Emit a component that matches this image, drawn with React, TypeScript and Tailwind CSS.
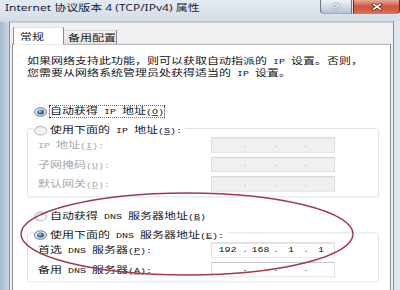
import React from 'react'

// ascii runs get a 6px-per-char mono face so the widths follow the old bitmap font
const Txt = ({ s }: { s: string }) => (
  <>
    {s
      .split(/([ -~]+)/)
      .filter(Boolean)
      .map((p, i) =>
        /^[ -~]+$/.test(p) ? (
          <span key={i} className="font-['Liberation_Mono',monospace] text-[10px] whitespace-pre">
            {p}
          </span>
        ) : (
          <React.Fragment key={i}>{p}</React.Fragment>
        )
      )}
  </>
)

const Mn = ({ pre, k, colon }: { pre: string; k: string; colon?: boolean }) => (
  <>
    <Txt s={pre} />
    <span className="font-['Liberation_Mono',monospace] text-[10px] whitespace-pre">
      (<span className="underline">{k}</span>){colon ? ':' : ''}
    </span>
  </>
)

const Radio = ({
  checked,
  focused,
  children,
}: {
  checked?: boolean
  focused?: boolean
  children: React.ReactNode
}) => (
  <div className="flex items-center h-[20px]">
    <span
      className={
        checked
          ? 'flex items-center justify-center w-[13px] h-[13px] rounded-full border border-[#626b76] bg-linear-to-br from-[#eeeeee] to-[#cfd3d8]'
          : 'flex items-center justify-center w-[13px] h-[13px] rounded-full border border-[#a3a8ae] bg-linear-to-br from-[#e6e6e6] to-[#ffffff]'
      }
    >
      {checked && (
        <span className="w-[7px] h-[7px] rounded-full bg-[radial-gradient(circle_at_40%_35%,#9fd0ef,#2a6298_55%,#123f6a)]" />
      )}
    </span>
    <span
      className={
        focused
          ? 'ml-[2px] leading-[13px] border border-dotted border-[#333]'
          : 'ml-[2px] leading-[13px] border border-transparent'
      }
    >
      {children}
    </span>
  </div>
)

const IpBox = ({ v, disabled }: { v?: string[]; disabled?: boolean }) => {
  const p = v ?? ['', '', '', '']
  const dot = disabled ? 'text-[#b4b4b4]' : 'text-[#444]'
  return (
    <div
      className={
        disabled
          ? "flex h-[21px] w-[124px] border border-[#dcdcdc] border-t-[#c6c6c6] bg-[#f0f0f0] font-['Liberation_Mono',monospace] text-[10px]"
          : "flex h-[21px] w-[124px] border border-[#dde1e6] border-t-[#aeb2b8] bg-white font-['Liberation_Mono',monospace] text-[10px] text-[#111]"
      }
    >
      <span className="w-[31px] flex items-center justify-center">{p[0]}</span>
      <span className={`w-[4px] flex items-center justify-center ${dot}`}>.</span>
      <span className="w-[27px] flex items-center justify-center">{p[1]}</span>
      <span className={`w-[4px] flex items-center justify-center ${dot}`}>.</span>
      <span className="w-[26px] flex items-center justify-center">{p[2]}</span>
      <span className={`w-[4px] flex items-center justify-center ${dot}`}>.</span>
      <span className="w-[26px] flex items-center justify-center">{p[3]}</span>
    </div>
  )
}

const Row = ({ label, disabled, v }: { label: React.ReactNode; disabled?: boolean; v?: string[] }) => (
  <div className="flex items-center h-[21px]">
    <span className={disabled ? 'w-[173px] leading-[13px] text-[#a6a6a6]' : 'w-[173px] leading-[13px]'}>
      {label}
    </span>
    <IpBox v={v} disabled={disabled} />
  </div>
)

const App: React.FunctionComponent = () => {
  return (
    <div className="relative w-[400px] h-[290px] overflow-hidden bg-[#dfe6ee]">
      {/* the shot is squashed vertically, so lay out at full height and scale down */}
      <div className="w-[400px] h-[403px] origin-top scale-y-[0.72] flex flex-col font-['Noto_Sans_CJK_SC',sans-serif] text-[12px] text-[#141414]">
        <div className="flex items-start h-[30px] bg-linear-to-b from-[#e4eaf1] to-[#d3dde8]">
          <div className="flex-1 pl-[5px] pt-[3px] leading-[16px] font-['Noto_Sans','Noto_Sans_CJK_SC',sans-serif] text-[#1b2633]">
            Internet 协议版本 4 (TCP/IPv4) 属性
          </div>
          <div className="w-[32px] h-[19px] rounded-bl-[4px] border border-t-0 border-[#66778b] bg-linear-to-b from-[#eef2f7] via-[#d3dbe5] to-[#b5c3d3] flex items-center justify-center">
            <span className="text-white font-bold text-[13px] leading-none font-['Noto_Sans',sans-serif] [text-shadow:0_0_2px_#1e2a38]">
              ?
            </span>
          </div>
          <div className="w-[47px] h-[19px] ml-[1px] rounded-br-[4px] border border-t-0 border-[#6e2b20] bg-linear-to-b from-[#eaa999] via-[#cd553f] to-[#d96c50] flex items-center justify-center">
            <svg width="12" height="13" viewBox="0 0 12 12">
              <path d="M2.5 2.5 L9.5 9.5 M9.5 2.5 L2.5 9.5" stroke="#4a1a12" strokeWidth="3.6" strokeLinecap="round" />
              <path d="M2.5 2.5 L9.5 9.5 M9.5 2.5 L2.5 9.5" stroke="#ffffff" strokeWidth="2" strokeLinecap="round" />
            </svg>
          </div>
        </div>

        <div className="flex flex-1">
          <div className="w-[9px] bg-linear-to-r from-[#a7bace] to-[#ccd8e5]" />
          <div className="w-[385px] flex flex-col border-x border-t border-[#7f8fa1] bg-[#f0f0f0] px-[2px] pt-[6px]">
            <div className="flex items-end h-[24px] pl-[1px]">
              <div className="relative z-10 -mb-px h-[25px] w-[51px] flex items-center pl-[6px] bg-white border border-b-0 border-[#898c95] rounded-t-[2px]">
                常规
              </div>
              <div className="-ml-px h-[20px] w-[54px] flex items-center pl-[4px] bg-linear-to-b from-[#f4f4f4] to-[#e2e2e2] border border-b-0 border-[#898c95] rounded-t-[2px]">
                备用配置
              </div>
            </div>

            <div className="flex-1 flex flex-col bg-white border border-b-0 border-[#898c95]">
              <p className="mt-[15px] ml-[14px] leading-[13px]">
                <Txt s="如果网络支持此功能，则可以获取自动指派的 IP 设置。否则，" />
                <br />
                <Txt s="您需要从网络系统管理员处获得适当的 IP 设置。" />
              </p>

              <div className="mt-[36px] ml-[21px]">
                <Radio checked focused>
                  <Mn pre="自动获得 IP 地址" k="O" />
                </Radio>
              </div>

              <fieldset className="ml-[14px] w-[352px] border border-[#d5dfe5] rounded-[3px] pl-[6px] pb-[7px]">
                <legend className="h-[26px] pt-[6px] pr-[2px]">
                  <Radio>
                    <Mn pre="使用下面的 IP 地址" k="S" colon />
                  </Radio>
                </legend>
                <div className="flex flex-col gap-[6px] pl-[4px]">
                  <Row disabled label={<Mn pre="IP 地址" k="I" colon />} />
                  <Row disabled label={<Mn pre="子网掩码" k="U" colon />} />
                  <Row disabled label={<Mn pre="默认网关" k="D" colon />} />
                </div>
              </fieldset>

              <div className="mt-[16px] ml-[21px]">
                <Radio>
                  <Mn pre="自动获得 DNS 服务器地址" k="B" />
                </Radio>
              </div>

              <fieldset className="ml-[14px] w-[352px] border border-[#d5dfe5] rounded-[3px] pl-[6px] pb-[6px]">
                <legend className="h-[26px] pt-[6px] pr-[2px]">
                  <Radio checked>
                    <Mn pre="使用下面的 DNS 服务器地址" k="E" colon />
                  </Radio>
                </legend>
                <div className="flex flex-col gap-[6px] pl-[4px] pt-[1px]">
                  <Row label={<Mn pre="首选 DNS 服务器" k="P" colon />} v={['192', '168', '1', '1']} />
                  <Row label={<Mn pre="备用 DNS 服务器" k="A" colon />} />
                </div>
              </fieldset>
            </div>
          </div>
          <div className="flex-1 bg-[#e1e7ee]" />
        </div>
      </div>

      {/* hand-drawn red ring marking the DNS settings */}
      <svg className="absolute inset-0 pointer-events-none" width="400" height="290">
        <ellipse cx="187" cy="234" rx="166" ry="41" fill="none" stroke="#a33a4b" strokeWidth="1.5" />
      </svg>
    </div>
  )
}

export default App
